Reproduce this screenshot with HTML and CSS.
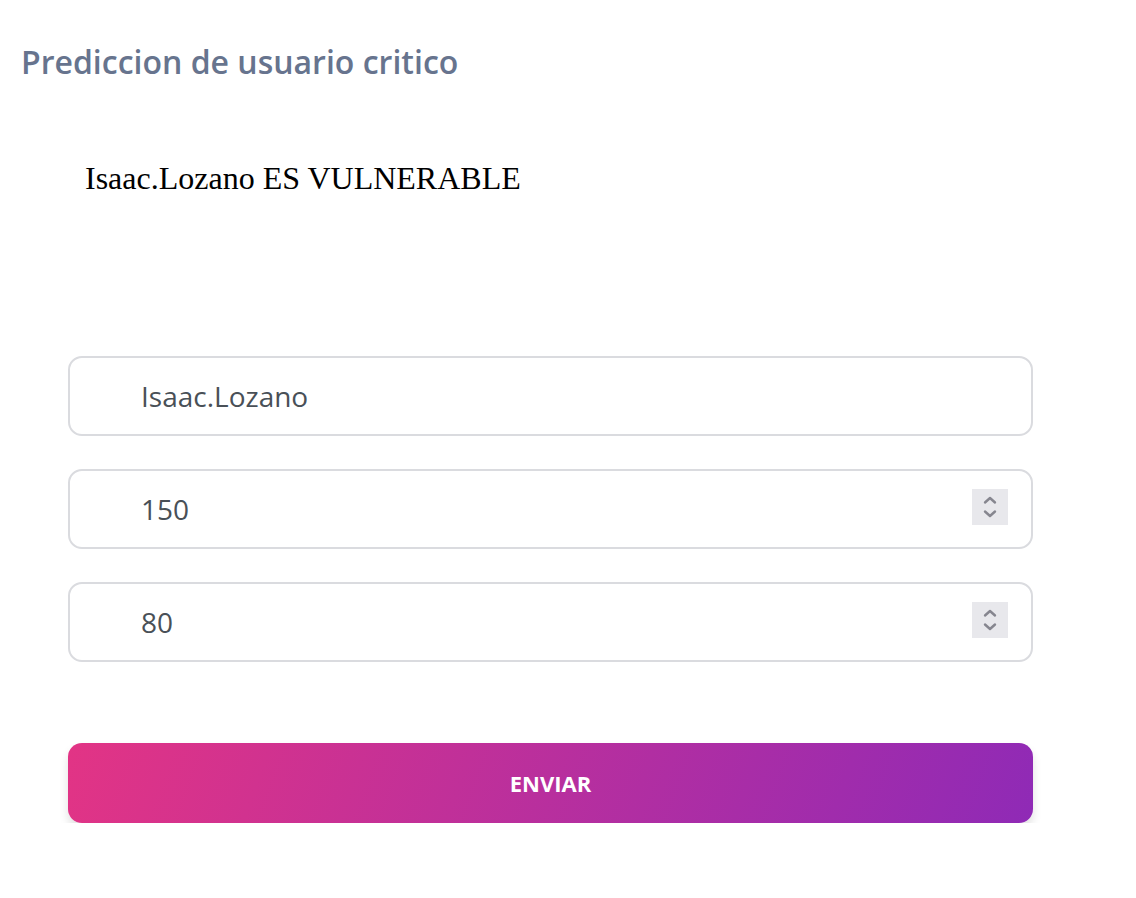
FILE: index.html
```html
<!DOCTYPE html>
<html lang="es">
<head>
<meta charset="utf-8">
<title>Prediccion de usuario critico</title>
<link rel="stylesheet" href="styles.css">
</head>
<body>
<div class="page">
  <h1 class="title">Prediccion de usuario critico</h1>
  <p class="result">Isaac.Lozano ES VULNERABLE</p>
  <form class="form">
    <div class="field">
      <input class="input" type="text" value="Isaac.Lozano">
    </div>
    <div class="field">
      <input class="input" type="text" value="150">
      <span class="spinner">
        <svg width="14" height="22" viewBox="0 0 14 22"><path d="M2 6.5 L7 2 L12 6.5" fill="none" stroke="#86868f" stroke-width="2.4" stroke-linecap="round" stroke-linejoin="round"/><path d="M2 15.5 L7 20 L12 15.5" fill="none" stroke="#86868f" stroke-width="2.4" stroke-linecap="round" stroke-linejoin="round"/></svg>
      </span>
    </div>
    <div class="field">
      <input class="input" type="text" value="80">
      <span class="spinner">
        <svg width="14" height="22" viewBox="0 0 14 22"><path d="M2 6.5 L7 2 L12 6.5" fill="none" stroke="#86868f" stroke-width="2.4" stroke-linecap="round" stroke-linejoin="round"/><path d="M2 15.5 L7 20 L12 15.5" fill="none" stroke="#86868f" stroke-width="2.4" stroke-linecap="round" stroke-linejoin="round"/></svg>
      </span>
    </div>
    <button class="btn" type="button">ENVIAR</button>
  </form>
</div>
</body>
</html>
```

FILE: styles.css
```css
html, body {
  margin: 0;
  padding: 0;
  background: #ffffff;
}

.page {
  padding: 40px 0 0 21px;
  display: flex;
  flex-direction: column;
}

.title {
  margin: 0;
  font-family: "Open Sans", sans-serif;
  font-weight: 600;
  font-size: 32px;
  line-height: 44px;
  color: #67748e;
}

.result {
  margin: 74px 0 0 64px;
  font-family: "Liberation Serif", serif;
  font-size: 32px;
  line-height: 40px;
  color: #000000;
}

.form {
  margin: 158px 0 0 47px;
  width: 965px;
  display: flex;
  flex-direction: column;
  gap: 33px;
}

.field {
  position: relative;
}

.input {
  box-sizing: border-box;
  display: block;
  width: 100%;
  height: 80px;
  padding: 0 24px 0 71px;
  border: 2px solid #dadbdf;
  border-radius: 14px;
  font-family: "Open Sans", sans-serif;
  font-size: 28px;
  color: #495057;
  background: #ffffff;
  outline: none;
}

.spinner {
  position: absolute;
  right: 25px;
  top: 20px;
  width: 36px;
  height: 36px;
  background: #e8e8ec;
  display: flex;
  align-items: center;
  justify-content: center;
}

.btn {
  margin-top: 48px;
  height: 80px;
  border: none;
  border-radius: 14px;
  background: linear-gradient(110deg, #e23485 0%, #8f2ab6 100%);
  box-shadow: 0 6px 10px rgba(0, 0, 0, 0.12);
  font-family: "Open Sans", sans-serif;
  font-weight: 700;
  font-size: 22px;
  color: #ffffff;
  cursor: pointer;
}
```
